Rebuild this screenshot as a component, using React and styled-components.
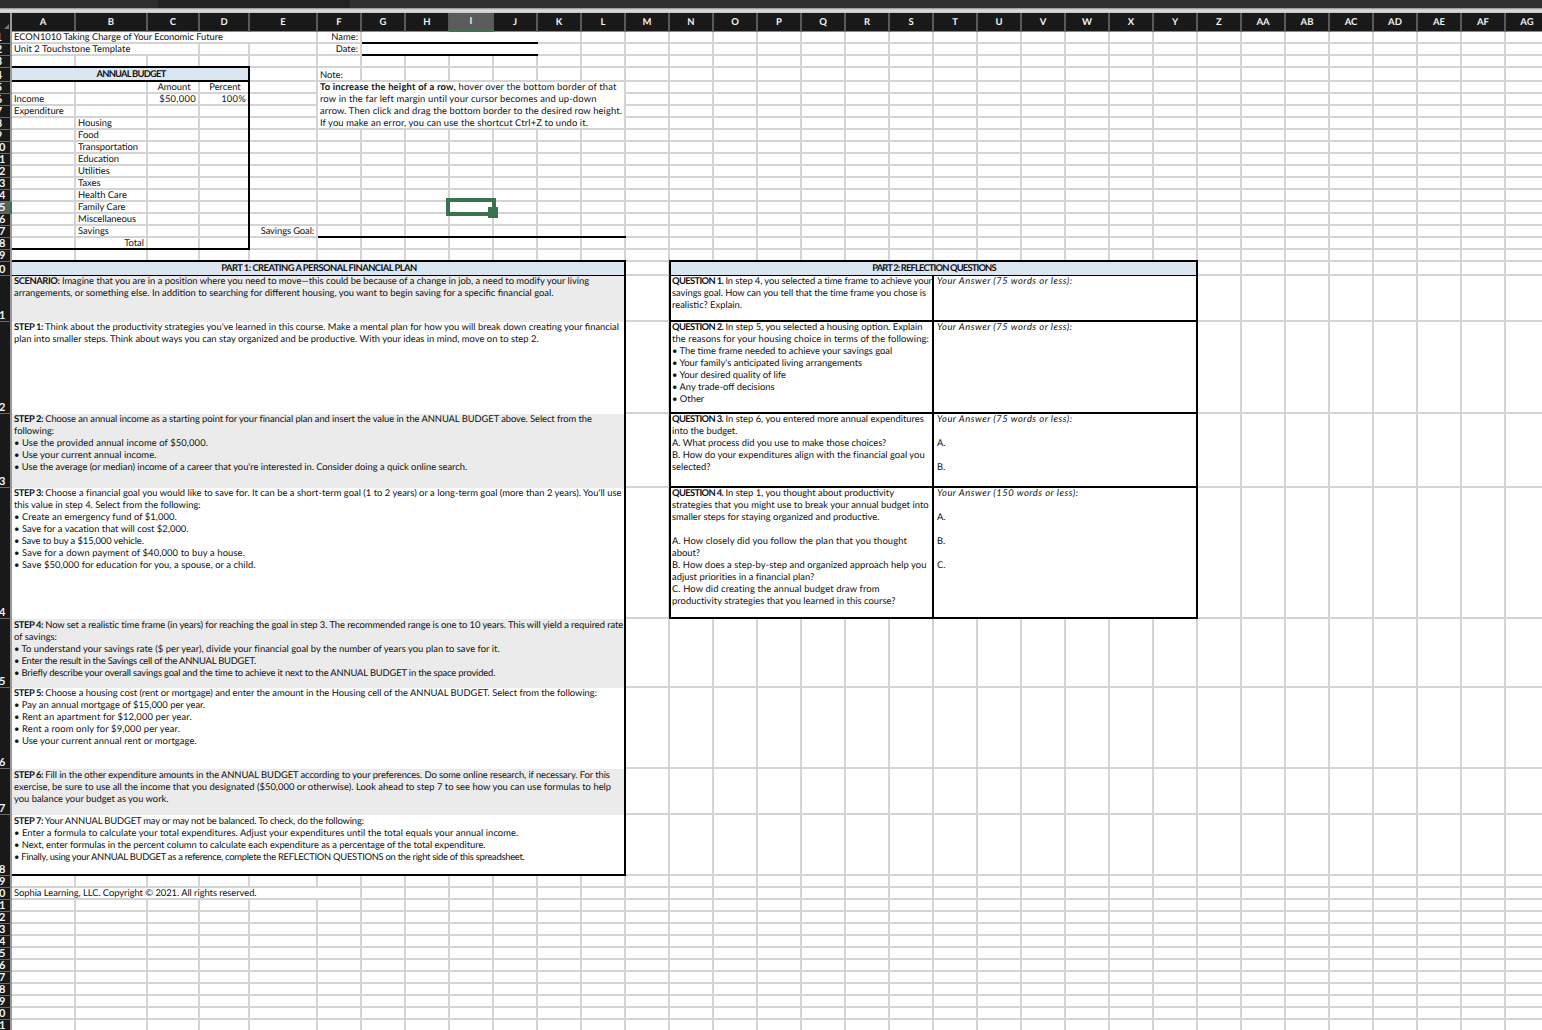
import React from "react";
import styled, { createGlobalStyle, css } from "styled-components";

const GlobalStyle = createGlobalStyle`
  html, body {
    margin: 0;
    padding: 0;
    background: #fff;
    overflow: hidden;
  }
  * { box-sizing: border-box; }
`;

const COLUMNS = ["A","B","C","D","E","F","G","H","I","J","K","L","M","N","O","P","Q","R","S","T","U","V","W","X","Y","Z","AA","AB","AC","AD","AE","AF","AG"];
const COL_WIDTHS = [64, 72, 52, 50, 68, ...Array(28).fill(44)];
const ROW_HEIGHTS = [12, 12, 12, 14, ...Array(15).fill(12), 14, 46, 92, 74, 131, 69, 81, 46, 61, ...Array(13).fill(12)];

const tracks = css`
  display: grid;
  grid-template-columns: 12px ${COL_WIDTHS.map((w) => w + "px").join(" ")};
  grid-template-rows: 19px ${ROW_HEIGHTS.map((h) => h + "px").join(" ")};
`;

// column letters and sheet row numbers -> grid-area value
const at = (c1, r1, c2 = c1, r2 = r1) =>
  `${r1 + 1} / ${COLUMNS.indexOf(c1) + 2} / ${r2 + 2} / ${COLUMNS.indexOf(c2) + 3}`;

const Page = styled.div`
  width: 1542px;
  height: 1030px;
  overflow: hidden;
  font-family: Lato, "Liberation Sans", sans-serif;
  font-size: 9.4px;
  color: #111;
  text-rendering: geometricPrecision;
`;

const TopBar = styled.div`
  height: 8px;
  background: linear-gradient(to right, #2e2e2e 158px, #222 158px, #222 350px, #303030 350px);
`;

const TopStrip = styled.div`
  height: 5px;
  background: linear-gradient(#8c8c8c, #e2e2e2 45%, #c4c4c4);
`;

const Stack = styled.div`
  display: grid;
  width: max-content;
`;

const BaseGrid = styled.div`
  ${tracks}
  grid-area: 1 / 1;
`;

const OverGrid = styled.div`
  ${tracks}
  grid-area: 1 / 1;
`;

const Corner = styled.div`
  background: #191919;
  border-right: 2px solid #9a9a9a;
  display: flex;
  align-items: flex-end;
  justify-content: flex-end;
  padding: 0 1px 3px 0;
`;

const ColHead = styled.div`
  background: ${(p) => (p.$active ? "#5c5c5c" : "#191919")};
  border-right: 2px solid #5a5a5a;
  border-bottom: ${(p) => (p.$active ? "3px solid #3b7350" : "1px solid #8a8a8a")};
  color: #f2f2f2;
  font-weight: 700;
  font-size: 9.5px;
  display: flex;
  align-items: center;
  justify-content: center;
`;

const RowHead = styled.div`
  background: ${(p) => (p.$active ? "#5c5c5c" : "#191919")};
  border-right: ${(p) => (p.$active ? "4px solid #3b7350" : "2px solid #9a9a9a")};
  border-bottom: 1px solid #6a6a6a;
  color: #f2f2f2;
  font-weight: 700;
  font-size: 11px;
  line-height: 11px;
  overflow: hidden;
  display: flex;
  align-items: flex-end;
`;

const RowLabel = styled.span`
  flex: none;
  width: 24px;
  margin-left: -13px;
  text-align: center;
`;

const Cell = styled.div`
  background: #fff;
  border-right: 2px solid #d4d4d4;
  border-bottom: 2px solid #d4d4d4;
`;

const Placed = styled.div`
  grid-area: ${(p) => p.$area};
  min-width: 0;
`;

const Label = styled(Placed)`
  line-height: ${(p) => (p.$tall ? 16 : 12)}px;
  height: ${(p) => (p.$tall ? 12 : 10)}px;
  padding: 0 ${(p) => (p.$align === "right" ? 4 : 2)}px 0 2px;
  white-space: nowrap;
  text-align: ${(p) => p.$align || "left"};
  letter-spacing: ${(p) => p.$track || 0}px;
  background: ${(p) => (p.$fill ? "#fff" : "transparent")};
`;

const LineCell = styled(Placed)`
  background: #fff;
  border-bottom: 2px solid #000;
`;

const Rule = styled(Placed)`
  border-bottom: 2px solid #000;
`;

const TitleBar = styled(Placed)`
  background: #dce6f1;
  border-bottom: 1px solid #000;
  font-weight: 700;
  letter-spacing: ${(p) => p.$track}px;
  text-align: center;
  line-height: 14px;
  white-space: nowrap;
`;

const Frame = styled(Placed)`
  border: 2px solid #000;
  border-left-width: ${(p) => (p.$open ? 0 : 2)}px;
  margin-top: -2px;
  margin-left: ${(p) => (p.$open ? 0 : -1)}px;
`;

const NoteBlock = styled(Placed)`
  background: #fff;
  margin: 0 2px 2px 0;
  padding: 0 2px;
`;

const StepBlock = styled(Placed)`
  background: ${(p) => (p.$shade ? "#ebebeb" : "#fff")};
  padding: 0 2px;
  overflow: visible;
`;

const QuestionBlock = styled(Placed)`
  background: #fff;
  border-bottom: 2px solid #000;
  border-right: 2px solid #000;
  padding: 0 2px;
`;

const AnswerBlock = styled(Placed)`
  background: #fff;
  border-bottom: 2px solid #000;
  padding: 0 3px;
`;

const Lines = styled.div`
  margin-top: ${(p) => p.$shift ?? 0}px;
`;

const Line = styled.div`
  height: 12px;
  line-height: 12px;
  white-space: nowrap;
  font-style: ${(p) => (p.$italic ? "italic" : "normal")};
  letter-spacing: ${(p) => p.$track || 0}px;
`;

const Lead = styled.b`
  font-weight: 700;
  letter-spacing: ${(p) => p.$track ?? -0.42}px;
`;

const Selection = styled(Placed)`
  position: relative;
  border: 4px solid #3b7350;
  margin: -4px -2px -2px -4px;
`;

const Handle = styled.div`
  position: absolute;
  right: -6px;
  bottom: -6px;
  width: 10px;
  height: 11px;
  background: #3b7350;
`;

const budgetRows = [
  ["Housing", 8], ["Food", 9], ["Transportation", 10], ["Education", 11], ["Utilities", 12],
  ["Taxes", 13], ["Health Care", 14], ["Family Care", 15], ["Miscellaneous", 16], ["Savings", 17],
];

const steps = [
  {
    row: 21, shade: true, lead: "SCENARIO:",
    track: [-0.015, 0],
    lines: [
      " Imagine that you are in a position where you need to move—this could be because of a change in job, a need to modify your living",
      "arrangements, or something else. In addition to searching for different housing, you want to begin saving for a specific financial goal.",
    ],
  },
  {
    row: 22, lead: "STEP 1:",
    track: [0, 0.015],
    lines: [
      " Think about the productivity strategies you've learned in this course. Make a mental plan for how you will break down creating your financial",
      "plan into smaller steps. Think about ways you can stay organized and be productive. With your ideas in mind, move on to step 2.",
    ],
  },
  {
    row: 23, shade: true, lead: "STEP 2:",
    track: [-0.07, 0, 0.09, 0.06, -0.03],
    lines: [
      " Choose an annual income as a starting point for your financial plan and insert the value in the ANNUAL BUDGET above. Select from the",
      "following:",
      "• Use the provided annual income of $50,000.",
      "• Use your current annual income.",
      "• Use the average (or median) income of a career that you're interested in. Consider doing a quick online search.",
    ],
  },
  {
    row: 24, lead: "STEP 3:",
    track: [0.02, 0, 0.05, 0.02, -0.1, 0.12, 0.07],
    lines: [
      " Choose a financial goal you would like to save for. It can be a short-term goal (1 to 2 years) or a long-term goal (more than 2 years). You'll use",
      "this value in step 4. Select from the following:",
      "• Create an emergency fund of $1,000.",
      "• Save for a vacation that will cost $2,000.",
      "• Save to buy a $15,000 vehicle.",
      "• Save for a down payment of $40,000 to buy a house.",
      "• Save $50,000 for education for you, a spouse, or a child.",
    ],
  },
  {
    row: 25, shade: true, shift: 1, lead: "STEP 4:",
    track: [-0.07, 0, 0.03, -0.22, -0.16],
    lines: [
      " Now set a realistic time frame (in years) for reaching the goal in step 3. The recommended range is one to 10 years. This will yield a required rate",
      "of savings:",
      "• To understand your savings rate ($ per year), divide your financial goal by the number of years you plan to save for it.",
      "• Enter the result in the Savings cell of the ANNUAL BUDGET.",
      "• Briefly describe your overall savings goal and the time to achieve it next to the ANNUAL BUDGET in the space provided.",
    ],
  },
  {
    row: 26, lead: "STEP 5:",
    track: [-0.025, 0, 0.12, 0.13, 0.07],
    lines: [
      " Choose a housing cost (rent or mortgage) and enter the amount in the Housing cell of the ANNUAL BUDGET. Select from the following:",
      "• Pay an annual mortgage of $15,000 per year.",
      "• Rent an apartment for $12,000 per year.",
      "• Rent a room only for $9,000 per year.",
      "• Use your current annual rent or mortgage.",
    ],
  },
  {
    row: 27, shade: true, shift: 1, lead: "STEP 6:",
    track: [-0.085, 0.03, 0],
    lines: [
      " Fill in the other expenditure amounts in the ANNUAL BUDGET according to your preferences. Do some online research, if necessary. For this",
      "exercise, be sure to use all the income that you designated ($50,000 or otherwise). Look ahead to step 7 to see how you can use formulas to help",
      "you balance your budget as you work.",
    ],
  },
  {
    row: 28, shift: 1, lead: "STEP 7:",
    track: [-0.15, 0.065, -0.03, -0.275],
    lines: [
      " Your ANNUAL BUDGET may or may not be balanced. To check, do the following:",
      "• Enter a formula to calculate your total expenditures. Adjust your expenditures until the total equals your annual income.",
      "• Next, enter formulas in the percent column to calculate each expenditure as a percentage of the total expenditure.",
      "• Finally, using your ANNUAL BUDGET as a reference, complete the REFLECTION QUESTIONS on the right side of this spreadsheet.",
    ],
  },
];

const questions = [
  {
    row: 21, lead: "QUESTION 1.",
    track: [-0.09, -0.05, 0],
    lines: [
      " In step 4, you selected a time frame to achieve your",
      "savings goal. How can you tell that the time frame you chose is",
      "realistic? Explain.",
    ],
    answer: ["Your Answer (75 words or less):"],
  },
  {
    row: 22, lead: "QUESTION 2.",
    track: [0, 0.1],
    lines: [
      " In step 5, you selected a housing option. Explain",
      "the reasons for your housing choice in terms of the following:",
      "• The time frame needed to achieve your savings goal",
      "• Your family's anticipated living arrangements",
      "• Your desired quality of life",
      "• Any trade-off decisions",
      "• Other",
    ],
    answer: ["Your Answer (75 words or less):"],
  },
  {
    row: 23, lead: "QUESTION 3.",
    track: [0, 0, 0, 0.03, 0],
    lines: [
      " In step 6, you entered more annual expenditures",
      "into the budget.",
      "A. What process did you use to make those choices?",
      "B. How do your expenditures align with the financial goal you",
      "selected?",
    ],
    answer: ["Your Answer (75 words or less):", "", "A.", "", "B."],
  },
  {
    row: 24, lead: "QUESTION 4.",
    track: [0, 0.03, 0, 0, 0.13, 0, 0.05, 0.03, 0.11, 0.03],
    lines: [
      " In step 1, you thought about productivity",
      "strategies that you might use to break your annual budget into",
      "smaller steps for staying organized and productive.",
      "",
      "A. How closely did you follow the plan that you thought",
      "about?",
      "B. How does a step-by-step and organized approach help you",
      "adjust priorities in a financial plan?",
      "C. How did creating the annual budget draw from",
      "productivity strategies that you learned in this course?",
    ],
    answer: ["Your Answer (150 words or less):", "", "A.", "", "B.", "", "C."],
  },
];

function Sheet() {
  return (
    <BaseGrid>
      <Corner>
        <svg width="5" height="5" viewBox="0 0 5 5">
          <path d="M5 0V5H0Z" fill="#777" />
        </svg>
      </Corner>
      {COLUMNS.map((c) => (
        <ColHead key={c} $active={c === "I"}>{c}</ColHead>
      ))}
      {ROW_HEIGHTS.map((_, r) => (
        <React.Fragment key={r}>
          <RowHead $active={r + 1 === 15}>
            <RowLabel>{r + 1}</RowLabel>
          </RowHead>
          {COLUMNS.map((c) => (
            <Cell key={c} />
          ))}
        </React.Fragment>
      ))}
    </BaseGrid>
  );
}

function App() {
  return (
    <Page>
      <GlobalStyle />
      <TopBar />
      <TopStrip />
      <Stack>
        <Sheet />
        <OverGrid>
          <Label $area={at("A", 1, "D", 1)} $fill $track={-0.04}>ECON1010 Taking Charge of Your Economic Future</Label>
          <Label $area={at("A", 2, "B", 2)} $fill $track={0.07}>Unit 2 Touchstone Template</Label>
          <Label $area={at("F", 1)} $align="right">Name:</Label>
          <Label $area={at("F", 2)} $align="right">Date:</Label>
          <LineCell $area={at("G", 1, "J", 1)} />
          <LineCell $area={at("G", 2, "J", 2)} />

          <TitleBar $area={at("A", 4, "D", 4)} $track={-0.78}>ANNUAL BUDGET</TitleBar>
          <Rule $area={at("A", 4, "D", 4)} />
          <Label $area={at("C", 5)} $align="center">Amount</Label>
          <Label $area={at("D", 5)} $align="center">Percent</Label>
          <Label $area={at("A", 6)}>Income</Label>
          <Label $area={at("C", 6)} $align="right" $track={0.3}>$50,000</Label>
          <Label $area={at("D", 6)} $align="right" $track={0.25}>100%</Label>
          <Label $area={at("A", 7)}>Expenditure</Label>
          {budgetRows.map(([name, row]) => (
            <Label key={name} $area={at("B", row)}>{name}</Label>
          ))}
          <Label $area={at("B", 18)} $align="right">Total</Label>
          <Frame $open $area={at("A", 4, "D", 18)} />

          <Label $area={at("F", 4)} $tall>Note:</Label>
          <NoteBlock $area={at("F", 5, "L", 8)}>
            <Lines>
              <Line $track={0.18}><Lead $track={0.2}>To increase the height of a row,</Lead> hover over the bottom border of that</Line>
              <Line $track={0.15}>row in the far left margin until your cursor becomes and up-down</Line>
              <Line $track={0.12}>arrow. Then click and drag the bottom border to the desired row height.</Line>
              <Line $track={0.11}>If you make an error, you can use the shortcut Ctrl+Z to undo it.</Line>
            </Lines>
          </NoteBlock>

          <Selection $area={at("I", 15)}>
            <Handle />
          </Selection>

          <Label $area={at("E", 17)} $align="right" $track={-0.1}>Savings Goal:</Label>
          <Rule $area={at("F", 17, "L", 17)} />

          <TitleBar $area={at("A", 20, "L", 20)} $track={-0.54}>PART 1: CREATING A PERSONAL FINANCIAL PLAN</TitleBar>
          {steps.map((s) => (
            <StepBlock key={s.row} $area={at("A", s.row, "L", s.row)} $shade={s.shade}>
              <Lines $shift={s.shift}>
                {s.lines.map((text, i) => (
                  <Line key={i} $track={s.track[i]}>
                    {i === 0 && <Lead>{s.lead}</Lead>}
                    {text}
                  </Line>
                ))}
              </Lines>
            </StepBlock>
          ))}
          <Frame $open $area={at("A", 20, "L", 28)} />

          <TitleBar $area={at("N", 20, "Y", 20)} $track={-0.85}>PART 2: REFLECTION QUESTIONS</TitleBar>
          {questions.map((q) => (
            <React.Fragment key={q.row}>
              <QuestionBlock $area={at("N", q.row, "S", q.row)}>
                <Lines>
                  {q.lines.map((text, i) => (
                    <Line key={i} $track={q.track[i]}>
                      {i === 0 && <Lead $track={-0.65}>{q.lead}</Lead>}
                      {text}
                    </Line>
                  ))}
                </Lines>
              </QuestionBlock>
              <AnswerBlock $area={at("T", q.row, "Y", q.row)}>
                <Lines>
                  {q.answer.map((text, i) => (
                    <Line key={i} $italic={i === 0} $track={i === 0 ? 0.5 : 0}>{text}</Line>
                  ))}
                </Lines>
              </AnswerBlock>
            </React.Fragment>
          ))}
          <Frame $area={at("N", 20, "Y", 24)} />

          <Label $area={at("A", 30, "E", 30)} $fill $track={-0.05}>Sophia Learning, LLC. Copyright © 2021. All rights reserved.</Label>
        </OverGrid>
      </Stack>
    </Page>
  );
}

export default App;
